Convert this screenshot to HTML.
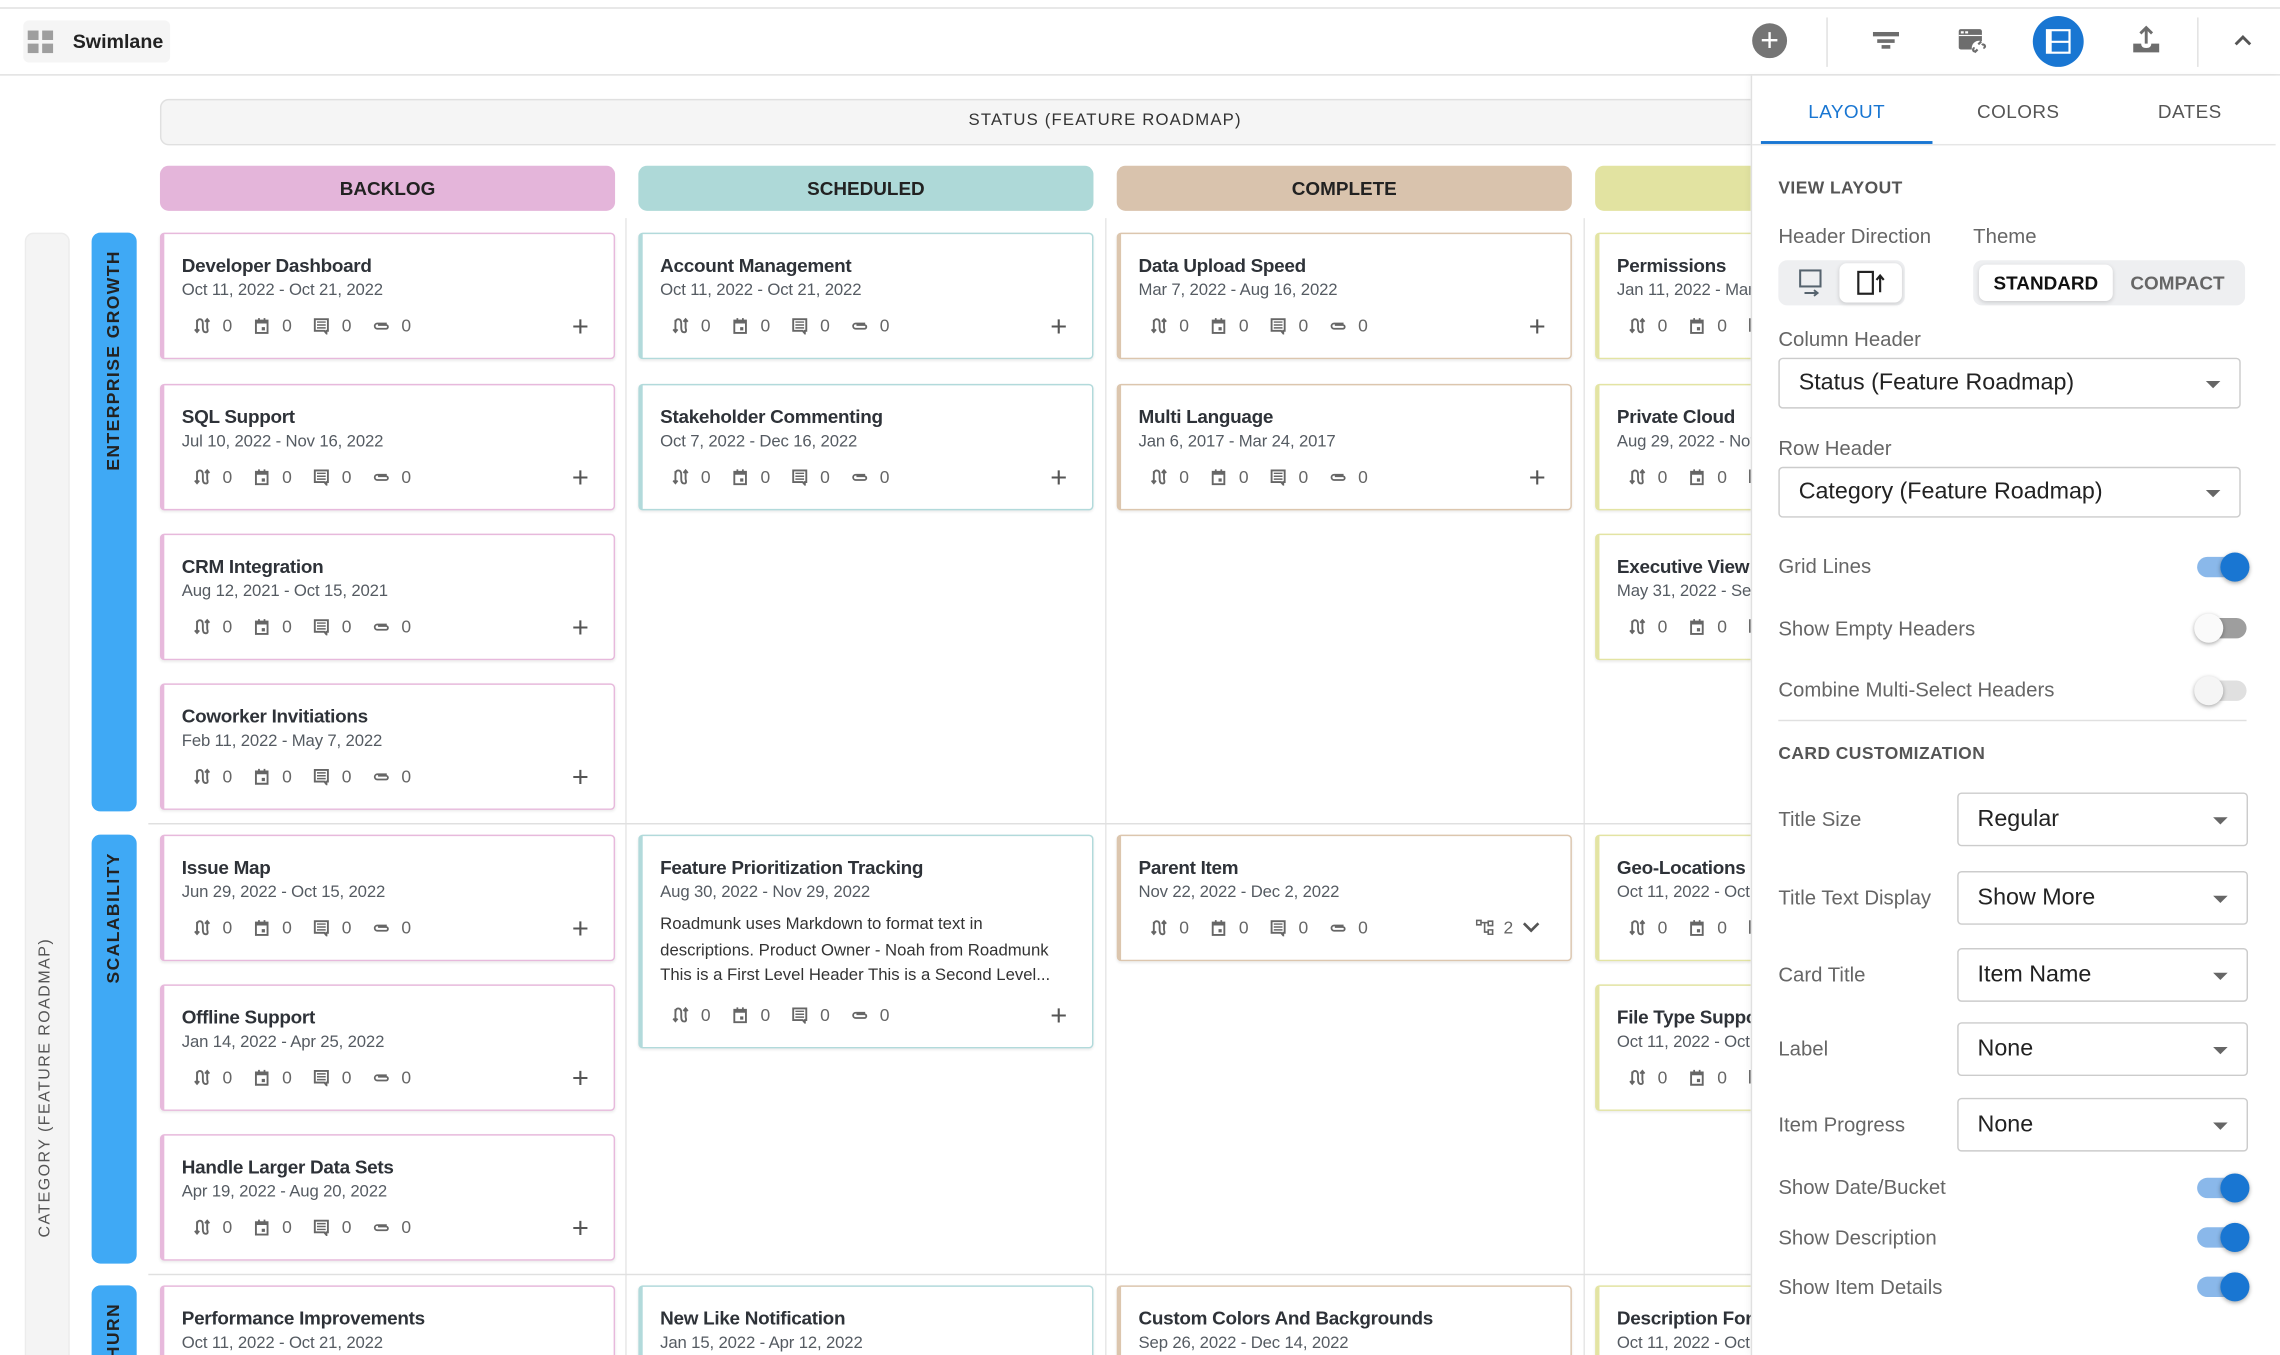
<!DOCTYPE html>
<html><head><meta charset="utf-8">
<style>
*{box-sizing:border-box;margin:0;padding:0}
html,body{width:2280px;height:1355px;overflow:hidden;background:#fff}
#s{position:absolute;left:0;top:0;width:1568px;height:932px;transform:scale(1.45408);transform-origin:0 0;font-family:"Liberation Sans",Arial,sans-serif;color:#333;overflow:hidden}
.a{position:absolute}
.card{position:absolute;width:313px;height:87px;background:#fff;border:1px solid;border-left-width:3px;border-radius:3px;box-shadow:0 1px 2px rgba(0,0,0,.08)}
.b{border-color:#e7b9dc}.sc{border-color:#b2dadb}.cm{border-color:#dcc6ae}.y{border-color:#e3e4a3}
.t{position:absolute;left:12px;top:14px;font-size:13px;letter-spacing:-0.2px;font-weight:bold;color:#2e3238;white-space:nowrap}
.d{position:absolute;left:12px;top:33px;font-size:11.5px;letter-spacing:-0.1px;color:#555b62;white-space:nowrap}
.f{position:absolute;left:20px;top:56px;font-size:12px;color:#666;white-space:nowrap;display:flex}
.f span{display:inline-flex;align-items:center;width:41px}
.f svg{width:12px;height:12px;margin-right:8px}
.p{position:absolute;right:17px;top:53px;font-size:20px;color:#555;font-weight:normal}
.vl{position:absolute;writing-mode:vertical-rl;transform:rotate(180deg);font-weight:bold;font-size:12px;letter-spacing:1px;color:#222;white-space:nowrap}
.lbl{position:absolute;left:1223px;font-size:14px;color:#666}
.sel{position:absolute;border:1px solid #ccc;border-radius:3px;background:#fff;font-size:16px;color:#222}
.sel span{position:absolute;left:13px;top:50%;transform:translateY(-50%);white-space:nowrap}
.sel i{position:absolute;right:13px;top:50%;margin-top:-2px;border-left:5px solid transparent;border-right:5px solid transparent;border-top:5px solid #666}
.tg{position:absolute;left:1511px;width:34px;height:14px;border-radius:7px}
.tg i{position:absolute;top:-3px;width:20px;height:20px;border-radius:50%;box-shadow:0 1px 3px rgba(0,0,0,.35)}
.on{background:#8ab8ea}.on i{right:-2px;background:#1976d2}
.off{background:#9e9e9e}.off i{left:-2px;background:#fafafa}
.dis{background:#e0e0e0}.dis i{left:-2px;background:#f5f5f5}
</style></head><body>
<svg width="0" height="0" style="position:absolute">
<defs>
<symbol id="i1" viewBox="0 0 12 12"><path d="M2.5 2v8M1 8.5l1.5 1.8L4 8.5M2.5 4.5q0-3 2-3t2 3v3q0 3 2 3t1-3V2M8 3.3l1.5-1.8 1.5 1.8" fill="none" stroke="#666" stroke-width="1.3"/></symbol>
<symbol id="i2" viewBox="0 0 12 12"><path d="M2 2.5h8v8.5H2z" fill="none" stroke="#666" stroke-width="1.3"/><path d="M2 2.5h8v2H2zM3.5 0.8h1.2v2H3.5zM7.3 0.8h1.2v2H7.3zM6 7h2.2v2.2H6z" fill="#666"/></symbol>
<symbol id="i3" viewBox="0 0 12 12"><path d="M1.5 1.5h9v8h-1v1.8L8 9.5H1.5z" fill="none" stroke="#666" stroke-width="1.3"/><path d="M3 3.5h6M3 5.5h6M3 7.5h6" stroke="#666" stroke-width="1"/></symbol>
<symbol id="i4" viewBox="0 0 12 12"><path d="M10 4.5H3.5a1.8 1.8 0 0 0 0 3.6H9.5a1.3 1.3 0 0 0 0-2.6H4" fill="none" stroke="#666" stroke-width="1.2"/></symbol>
</defs></svg>
<div id="s">
<div class="a" style="left:0;top:5px;width:1568px;height:1px;background:#e0e0e0"></div>
<div class="a" style="left:0;top:51px;width:1568px;height:1px;background:#e0e0e0"></div>
<div class="a" style="left:16px;top:14px;width:101px;height:29px;background:#f5f5f5;border-radius:4px"></div>
<svg class="a" style="left:19px;top:21px" width="18" height="16" viewBox="0 0 18 16"><rect x="0" y="0" width="7.5" height="6.5" fill="#9e9e9e"/><rect x="10" y="0" width="7.5" height="6.5" fill="#9e9e9e"/><rect x="0" y="9" width="7.5" height="6.5" fill="#9e9e9e"/><rect x="10" y="9" width="7.5" height="6.5" fill="#9e9e9e"/></svg>
<div class="a" style="left:50px;top:21px;font-size:13.5px;font-weight:bold;color:#222">Swimlane</div>
<div class="a" style="left:1205px;top:16px;width:24px;height:24px;border-radius:50%;background:#757575"></div>
<div class="a" style="left:1209px;top:14px;width:16px;text-align:center;color:#fff;font-size:22px;line-height:28px">+</div>
<div class="a" style="left:1256px;top:12px;width:1px;height:34px;background:#e0e0e0"></div>
<svg class="a" style="left:1288px;top:21px" width="18" height="14" viewBox="0 0 18 14"><rect x="0" y="1" width="18" height="3" fill="#6d6d6d"/><rect x="3" y="6" width="12" height="2.5" fill="#6d6d6d"/><rect x="6" y="10" width="6" height="2.5" fill="#6d6d6d"/></svg>
<svg class="a" style="left:1347px;top:19px" width="20" height="20" viewBox="0 0 20 20"><rect x="0" y="1" width="16" height="14" rx="1.5" fill="#6d6d6d"/><rect x="1.5" y="2.5" width="2" height="1.5" fill="#fff"/><rect x="4.5" y="2.5" width="2" height="1.5" fill="#fff"/><rect x="0" y="5" width="16" height="0.8" fill="#fff"/><circle cx="14" cy="14" r="5" fill="#fff"/><path d="M11 17l2-2M13.5 11.5l2-2M12 16a1.2 1.2 0 1 1 -1-2M16 12a1.2 1.2 0 1 1 1 2" stroke="#6d6d6d" stroke-width="1.5" fill="none"/></svg>
<div class="a" style="left:1398px;top:11px;width:35px;height:35px;border-radius:50%;background:#1976d2"></div>
<svg class="a" style="left:1406px;top:19px" width="19" height="19" viewBox="0 0 19 19"><path d="M1 1h17v17H1z" fill="#fff"/><path d="M5 2.5h11.5v6.5H5zM5 10.5h11.5v6H5z" fill="#1976d2"/></svg>
<svg class="a" style="left:1467px;top:17px" width="18" height="20" viewBox="0 0 18 20"><path d="M9 2v11M5 6l4-4 4 4" stroke="#6d6d6d" stroke-width="2" fill="none"/><path d="M0 13h5.5q0 3 3.5 3t3.5-3H18v6H0z" fill="#6d6d6d"/></svg>
<div class="a" style="left:1511px;top:12px;width:1px;height:34px;background:#e0e0e0"></div>
<svg class="a" style="left:1536px;top:23px" width="13" height="9" viewBox="0 0 13 9"><path d="M1.5 7.5l5-5 5 5" stroke="#555" stroke-width="2" fill="none"/></svg>

<div class="a" style="left:110px;top:68px;width:1120px;height:32px;background:#f5f5f5;border:1px solid #e0e0e0;border-radius:6px"></div>
<div class="a" style="left:110px;top:77px;width:1300px;text-align:center;font-size:11.5px;letter-spacing:.8px;color:#333"><span style="position:relative;left:0">STATUS (FEATURE ROADMAP)</span></div>
<div class="a" style="left:110px;top:114px;width:313px;height:31px;background:#e4b5da;border-radius:6px;text-align:center;line-height:31px;font-size:13px;font-weight:bold;color:#222">BACKLOG</div>
<div class="a" style="left:439px;top:114px;width:313px;height:31px;background:#aed9d8;border-radius:6px;text-align:center;line-height:31px;font-size:13px;font-weight:bold;color:#222">SCHEDULED</div>
<div class="a" style="left:768px;top:114px;width:313px;height:31px;background:#d9c3ad;border-radius:6px;text-align:center;line-height:31px;font-size:13px;font-weight:bold;color:#222">COMPLETE</div>
<div class="a" style="left:1097px;top:114px;width:313px;height:31px;background:#e2e3a1;border-radius:6px"></div>

<div class="a" style="left:430px;top:150px;width:1px;height:790px;background:#e6e6e6"></div>
<div class="a" style="left:760px;top:150px;width:1px;height:790px;background:#e6e6e6"></div>
<div class="a" style="left:1089px;top:150px;width:1px;height:790px;background:#e6e6e6"></div>
<div class="a" style="left:102px;top:566px;width:1110px;height:1px;background:#e0e0e0"></div>
<div class="a" style="left:102px;top:876px;width:1110px;height:1px;background:#e0e0e0"></div>

<div class="a" style="left:17px;top:160px;width:31px;height:780px;background:#f4f4f4;border:1px solid #ececec;border-radius:6px"></div>
<div class="vl" style="left:25px;top:645px;font-weight:normal;font-size:11px;color:#555">CATEGORY (FEATURE ROADMAP)</div>
<div class="a" style="left:63px;top:160px;width:31px;height:398px;background:#3fa9f5;border-radius:6px"></div>
<div class="vl" style="left:71px;top:172px">ENTERPRISE GROWTH</div>
<div class="a" style="left:63px;top:574px;width:31px;height:295px;background:#3fa9f5;border-radius:6px"></div>
<div class="vl" style="left:71px;top:586px">SCALABILITY</div>
<div class="a" style="left:63px;top:884px;width:31px;height:60px;background:#3fa9f5;border-radius:6px;overflow:hidden"><div class="vl" style="left:8px;top:12px">REDUCE CHURN</div></div>

<div class="card b" style="left:110px;top:160px"><div class="t">Developer Dashboard</div><div class="d">Oct 11, 2022 - Oct 21, 2022</div><div class="f"><span><svg><use href="#i1"/></svg>0</span><span><svg><use href="#i2"/></svg>0</span><span><svg><use href="#i3"/></svg>0</span><span><svg><use href="#i4"/></svg>0</span></div><div class="p">+</div></div>
<div class="card b" style="left:110px;top:264px"><div class="t">SQL Support</div><div class="d">Jul 10, 2022 - Nov 16, 2022</div><div class="f"><span><svg><use href="#i1"/></svg>0</span><span><svg><use href="#i2"/></svg>0</span><span><svg><use href="#i3"/></svg>0</span><span><svg><use href="#i4"/></svg>0</span></div><div class="p">+</div></div>
<div class="card b" style="left:110px;top:367px"><div class="t">CRM Integration</div><div class="d">Aug 12, 2021 - Oct 15, 2021</div><div class="f"><span><svg><use href="#i1"/></svg>0</span><span><svg><use href="#i2"/></svg>0</span><span><svg><use href="#i3"/></svg>0</span><span><svg><use href="#i4"/></svg>0</span></div><div class="p">+</div></div>
<div class="card b" style="left:110px;top:470px"><div class="t">Coworker Invitiations</div><div class="d">Feb 11, 2022 - May 7, 2022</div><div class="f"><span><svg><use href="#i1"/></svg>0</span><span><svg><use href="#i2"/></svg>0</span><span><svg><use href="#i3"/></svg>0</span><span><svg><use href="#i4"/></svg>0</span></div><div class="p">+</div></div>
<div class="card b" style="left:110px;top:574px"><div class="t">Issue Map</div><div class="d">Jun 29, 2022 - Oct 15, 2022</div><div class="f"><span><svg><use href="#i1"/></svg>0</span><span><svg><use href="#i2"/></svg>0</span><span><svg><use href="#i3"/></svg>0</span><span><svg><use href="#i4"/></svg>0</span></div><div class="p">+</div></div>
<div class="card b" style="left:110px;top:677px"><div class="t">Offline Support</div><div class="d">Jan 14, 2022 - Apr 25, 2022</div><div class="f"><span><svg><use href="#i1"/></svg>0</span><span><svg><use href="#i2"/></svg>0</span><span><svg><use href="#i3"/></svg>0</span><span><svg><use href="#i4"/></svg>0</span></div><div class="p">+</div></div>
<div class="card b" style="left:110px;top:780px"><div class="t">Handle Larger Data Sets</div><div class="d">Apr 19, 2022 - Aug 20, 2022</div><div class="f"><span><svg><use href="#i1"/></svg>0</span><span><svg><use href="#i2"/></svg>0</span><span><svg><use href="#i3"/></svg>0</span><span><svg><use href="#i4"/></svg>0</span></div><div class="p">+</div></div>
<div class="card b" style="left:110px;top:884px"><div class="t">Performance Improvements</div><div class="d">Oct 11, 2022 - Oct 21, 2022</div></div>

<div class="card sc" style="left:439px;top:160px"><div class="t">Account Management</div><div class="d">Oct 11, 2022 - Oct 21, 2022</div><div class="f"><span><svg><use href="#i1"/></svg>0</span><span><svg><use href="#i2"/></svg>0</span><span><svg><use href="#i3"/></svg>0</span><span><svg><use href="#i4"/></svg>0</span></div><div class="p">+</div></div>
<div class="card sc" style="left:439px;top:264px"><div class="t">Stakeholder Commenting</div><div class="d">Oct 7, 2022 - Dec 16, 2022</div><div class="f"><span><svg><use href="#i1"/></svg>0</span><span><svg><use href="#i2"/></svg>0</span><span><svg><use href="#i3"/></svg>0</span><span><svg><use href="#i4"/></svg>0</span></div><div class="p">+</div></div>
<div class="card sc" style="left:439px;top:574px;height:147px"><div class="t">Feature Prioritization Tracking</div><div class="d">Aug 30, 2022 - Nov 29, 2022</div><div class="a" style="left:12px;top:53px;width:275px;font-size:11.5px;line-height:17.5px;color:#333">Roadmunk uses Markdown to format text in<br>descriptions. Product Owner - Noah from Roadmunk This is a First Level Header This is a Second Level...</div><div class="f" style="top:116px"><span><svg><use href="#i1"/></svg>0</span><span><svg><use href="#i2"/></svg>0</span><span><svg><use href="#i3"/></svg>0</span><span><svg><use href="#i4"/></svg>0</span></div><div class="p" style="top:113px">+</div></div>
<div class="card sc" style="left:439px;top:884px"><div class="t">New Like Notification</div><div class="d">Jan 15, 2022 - Apr 12, 2022</div></div>

<div class="card cm" style="left:768px;top:160px"><div class="t">Data Upload Speed</div><div class="d">Mar 7, 2022 - Aug 16, 2022</div><div class="f"><span><svg><use href="#i1"/></svg>0</span><span><svg><use href="#i2"/></svg>0</span><span><svg><use href="#i3"/></svg>0</span><span><svg><use href="#i4"/></svg>0</span></div><div class="p">+</div></div>
<div class="card cm" style="left:768px;top:264px"><div class="t">Multi Language</div><div class="d">Jan 6, 2017 - Mar 24, 2017</div><div class="f"><span><svg><use href="#i1"/></svg>0</span><span><svg><use href="#i2"/></svg>0</span><span><svg><use href="#i3"/></svg>0</span><span><svg><use href="#i4"/></svg>0</span></div><div class="p">+</div></div>
<div class="card cm" style="left:768px;top:574px"><div class="t">Parent Item</div><div class="d">Nov 22, 2022 - Dec 2, 2022</div><div class="f"><span><svg><use href="#i1"/></svg>0</span><span><svg><use href="#i2"/></svg>0</span><span><svg><use href="#i3"/></svg>0</span><span><svg><use href="#i4"/></svg>0</span></div>
<div class="a" style="left:244px;top:56px;font-size:12px;color:#666;white-space:nowrap"><svg width="13" height="12" viewBox="0 0 13 12" style="vertical-align:-2px;margin-right:6px"><path d="M0.5 1h3v3h-3zM8.5 1.5h3v3h-3zM8.5 7.5h3v3h-3zM3.5 2.5h5M6 2.5v6.5h2.5" fill="none" stroke="#666" stroke-width="1.1"/></svg>2 <svg width="12" height="9" viewBox="0 0 12 9" style="margin-left:3px"><path d="M1 2l5 5 5-5" stroke="#555" stroke-width="1.8" fill="none"/></svg></div></div>
<div class="card cm" style="left:768px;top:884px"><div class="t">Custom Colors And Backgrounds</div><div class="d">Sep 26, 2022 - Dec 14, 2022</div></div>

<div class="card y" style="left:1097px;top:160px"><div class="t">Permissions</div><div class="d">Jan 11, 2022 - Mar 3, 2022</div><div class="f"><span><svg><use href="#i1"/></svg>0</span><span><svg><use href="#i2"/></svg>0</span><span><svg><use href="#i3"/></svg>0</span></div></div>
<div class="card y" style="left:1097px;top:264px"><div class="t">Private Cloud</div><div class="d">Aug 29, 2022 - Nov 1, 2022</div><div class="f"><span><svg><use href="#i1"/></svg>0</span><span><svg><use href="#i2"/></svg>0</span><span><svg><use href="#i3"/></svg>0</span></div></div>
<div class="card y" style="left:1097px;top:367px"><div class="t">Executive View</div><div class="d">May 31, 2022 - Sep 1, 2022</div><div class="f"><span><svg><use href="#i1"/></svg>0</span><span><svg><use href="#i2"/></svg>0</span><span><svg><use href="#i3"/></svg>0</span></div></div>
<div class="card y" style="left:1097px;top:574px"><div class="t">Geo-Locations</div><div class="d">Oct 11, 2022 - Oct 21, 2022</div><div class="f"><span><svg><use href="#i1"/></svg>0</span><span><svg><use href="#i2"/></svg>0</span><span><svg><use href="#i3"/></svg>0</span></div></div>
<div class="card y" style="left:1097px;top:677px"><div class="t">File Type Support</div><div class="d">Oct 11, 2022 - Oct 21, 2022</div><div class="f"><span><svg><use href="#i1"/></svg>0</span><span><svg><use href="#i2"/></svg>0</span><span><svg><use href="#i3"/></svg>0</span></div></div>
<div class="card y" style="left:1097px;top:884px"><div class="t">Description Formatting</div><div class="d">Oct 11, 2022 - Oct 21, 2022</div></div>

<div class="a" style="left:1204px;top:52px;width:364px;height:880px;background:#fff;border-left:1px solid #e0e0e0;box-shadow:-2px 0 4px rgba(0,0,0,.04)"></div>
<div class="a" style="left:1211px;top:69px;width:118px;text-align:center;font-size:13px;color:#1976d2;letter-spacing:.3px">LAYOUT</div>
<div class="a" style="left:1329px;top:69px;width:118px;text-align:center;font-size:13px;color:#555;letter-spacing:.3px">COLORS</div>
<div class="a" style="left:1447px;top:69px;width:118px;text-align:center;font-size:13px;color:#555;letter-spacing:.3px">DATES</div>
<div class="a" style="left:1205px;top:99px;width:360px;height:1px;background:#e6e6e6"></div>
<div class="a" style="left:1211px;top:97px;width:118px;height:2px;background:#1976d2"></div>
<div class="a" style="left:1223px;top:122px;font-size:12px;font-weight:bold;color:#555;letter-spacing:.3px">VIEW LAYOUT</div>
<div class="lbl" style="top:154px">Header Direction</div>
<div class="lbl" style="left:1357px;top:154px">Theme</div>
<div class="a" style="left:1223px;top:179px;width:87px;height:31px;background:#eeeff1;border-radius:6px"></div>
<svg class="a" style="left:1237px;top:185px" width="17" height="19" viewBox="0 0 17 19"><rect x="1" y="1" width="14" height="11" fill="none" stroke="#56636e" stroke-width="1.4"/><path d="M4 16.5h9M10.5 14.5l2.5 2-2.5 2" stroke="#56636e" stroke-width="1.3" fill="none"/></svg>
<div class="a" style="left:1265px;top:181px;width:43px;height:27px;background:#fff;border-radius:5px;box-shadow:0 1px 3px rgba(0,0,0,.15)"></div>
<svg class="a" style="left:1277px;top:186px" width="20" height="17" viewBox="0 0 20 17"><rect x="1" y="1" width="10" height="15" fill="none" stroke="#222" stroke-width="1.5"/><path d="M16 4v11M13.5 6.5L16 3.5l2.5 3" stroke="#222" stroke-width="1.5" fill="none"/></svg>
<div class="a" style="left:1357px;top:179px;width:187px;height:31px;background:#eeeff1;border-radius:6px"></div>
<div class="a" style="left:1361px;top:182px;width:92px;height:25px;background:#fff;border-radius:5px;box-shadow:0 1px 3px rgba(0,0,0,.15);text-align:center;line-height:25px;font-size:13px;font-weight:bold;color:#111">STANDARD</div>
<div class="a" style="left:1455px;top:182px;width:85px;height:25px;text-align:center;line-height:25px;font-size:13px;font-weight:bold;color:#666">COMPACT</div>
<div class="lbl" style="top:225px">Column Header</div>
<div class="sel" style="left:1223px;top:246px;width:318px;height:35px"><span>Status (Feature Roadmap)</span><i></i></div>
<div class="lbl" style="top:300px">Row Header</div>
<div class="sel" style="left:1223px;top:321px;width:318px;height:35px"><span>Category (Feature Roadmap)</span><i></i></div>
<div class="lbl" style="top:381px">Grid Lines</div><div class="tg on" style="top:383px"><i></i></div>
<div class="lbl" style="top:424px">Show Empty Headers</div><div class="tg off" style="top:425px"><i></i></div>
<div class="lbl" style="top:466px">Combine Multi-Select Headers</div><div class="tg dis" style="top:468px"><i></i></div>
<div class="a" style="left:1223px;top:495px;width:322px;height:1px;background:#e0e0e0"></div>
<div class="a" style="left:1223px;top:511px;font-size:12px;font-weight:bold;color:#555;letter-spacing:.3px">CARD CUSTOMIZATION</div>
<div class="lbl" style="top:555px">Title Size</div><div class="sel" style="left:1346px;top:545px;width:200px;height:37px"><span>Regular</span><i></i></div>
<div class="lbl" style="top:609px">Title Text Display</div><div class="sel" style="left:1346px;top:599px;width:200px;height:37px"><span>Show More</span><i></i></div>
<div class="lbl" style="top:662px">Card Title</div><div class="sel" style="left:1346px;top:652px;width:200px;height:37px"><span>Item Name</span><i></i></div>
<div class="lbl" style="top:713px">Label</div><div class="sel" style="left:1346px;top:703px;width:200px;height:37px"><span>None</span><i></i></div>
<div class="lbl" style="top:765px">Item Progress</div><div class="sel" style="left:1346px;top:755px;width:200px;height:37px"><span>None</span><i></i></div>
<div class="lbl" style="top:808px">Show Date/Bucket</div><div class="tg on" style="top:810px"><i></i></div>
<div class="lbl" style="top:843px">Show Description</div><div class="tg on" style="top:844px"><i></i></div>
<div class="lbl" style="top:877px">Show Item Details</div><div class="tg on" style="top:878px"><i></i></div>
</div>
</body></html>
